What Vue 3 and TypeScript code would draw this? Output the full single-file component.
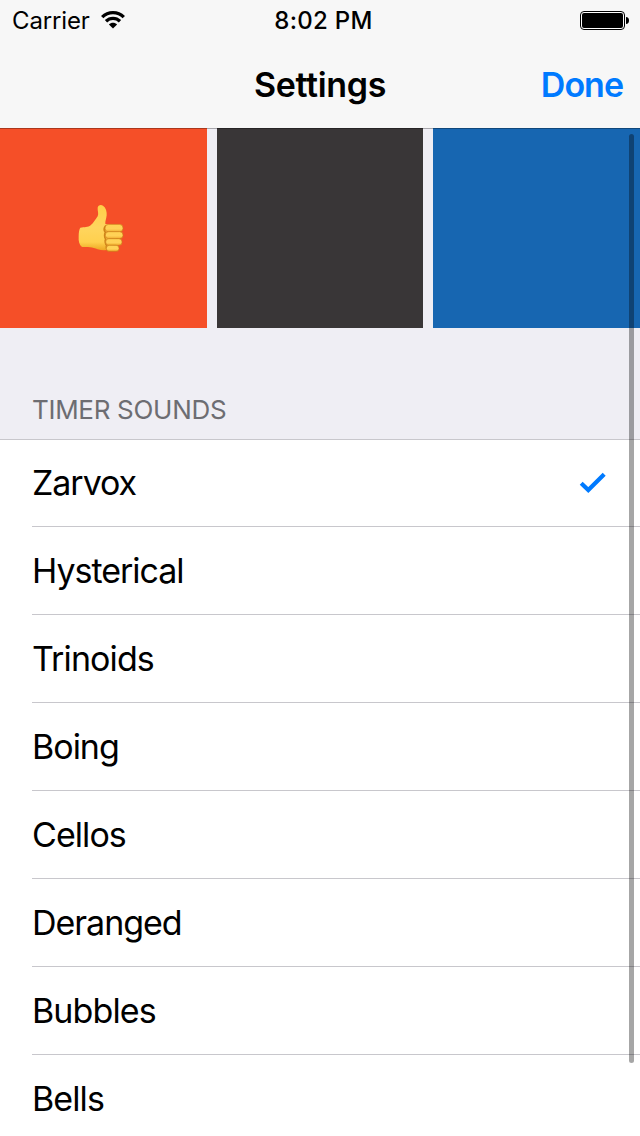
<script setup lang="ts">
interface Sound {
  name: string
  spacing: number
}

const sounds: Sound[] = [
  { name: 'Zarvox', spacing: -1.05 },
  { name: 'Hysterical', spacing: -1.03 },
  { name: 'Trinoids', spacing: -0.9 },
  { name: 'Boing', spacing: -1 },
  { name: 'Cellos', spacing: -0.93 },
  { name: 'Deranged', spacing: -1.03 },
  { name: 'Bubbles', spacing: -0.88 },
  { name: 'Bells', spacing: -0.9 },
]
const selected = 'Zarvox'
</script>

<template>
  <main class="screen">
    <header class="top">
      <div class="status">
        <div class="carrier">
          <span class="carrier-name">Carrier</span>
          <svg class="wifi" width="24" height="20" viewBox="0 0 24 20">
            <g fill="none" stroke="#000" stroke-width="3.3">
              <path d="M1.2 7.2C7.2 1.1 16.8 1.1 22.8 7.2" />
              <path d="M5 11.2C9 7.3 15 7.3 19 11.2" />
            </g>
            <path d="M7.9 14.4C10.2 12.3 13.8 12.3 16.1 14.4L12 18.6Z" />
          </svg>
        </div>
        <time class="clock">8:02 PM</time>
        <svg class="battery" width="49" height="20" viewBox="0 0 49 20">
          <rect x=".5" y=".5" width="44" height="18" rx="3.5" fill="#fff" stroke="#000" />
          <rect x="2" y="2" width="41" height="15" rx="2" />
          <path d="M46 6C48 6 49 7.2 49 9.5S48 13 46 13Z" />
        </svg>
      </div>
      <nav class="nav">
        <h1 class="title">Settings</h1>
        <button class="done" type="button">Done</button>
      </nav>
    </header>

    <section class="swatches">
      <div class="swatch orange">
        <svg class="thumb" width="64" height="64" viewBox="0 0 192 192">
          <defs>
            <linearGradient id="skin" x1="0" y1="0" x2="0" y2="1">
              <stop offset="0" stop-color="#ffcf48" />
              <stop offset=".5" stop-color="#ffd55e" />
              <stop offset=".82" stop-color="#ffd04e" />
              <stop offset="1" stop-color="#eda622" />
            </linearGradient>
            <linearGradient id="finger" x1="0" y1="0" x2="0" y2="1">
              <stop offset="0" stop-color="#ffd253" />
              <stop offset=".6" stop-color="#ffd158" />
              <stop offset="1" stop-color="#efaa2c" />
            </linearGradient>
          </defs>
          <path fill="url(#skin)" d="M31 98C43 96 54 98 62 91C71 83 77 73 83 64C87 56 82 47 83 38C84 30 93 28 99 32C108 38 111 50 110 61C109 72 105 79 106 87L131 91C142 98 141 143 128 155C120 168 98 167 83 163C67 155 54 157 36 156C28 150 25 140 26 124C26 112 28 101 31 98Z" />
          <path d="M108 91C102 98 102 107 106 112C103 117 103 127 107 132C104 138 106 147 110 151C107 157 110 164 116 167" fill="none" stroke="#d08418" stroke-width="5" />
          <g fill="url(#finger)" stroke="#cc7c18" stroke-width="2">
            <rect x="105" y="88" width="54" height="23" rx="11" />
            <rect x="106" y="110" width="53" height="21" rx="10" />
            <rect x="107" y="131" width="49" height="20" rx="9.5" />
            <rect x="109" y="151" width="38" height="18" rx="8.5" />
          </g>
        </svg>
      </div>
      <div class="swatch dark"></div>
      <div class="swatch blue"></div>
    </section>

    <h2 class="heading">TIMER SOUNDS</h2>
    <ul class="list">
      <li v-for="s in sounds" :key="s.name" class="row">
        <span class="name" :style="{ letterSpacing: s.spacing + 'px' }">{{ s.name }}</span>
        <svg v-if="s.name === selected" class="check" width="28" height="22" viewBox="0 0 28 22">
          <path d="M2.2 11.2L9.3 18L25.2 2.2" fill="none" stroke="#007aff" stroke-width="4.2" />
        </svg>
      </li>
    </ul>
    <div class="scrollbar"></div>
  </main>
</template>

<style>
body { margin: 0; overflow: hidden; }
</style>

<style scoped>
.screen {
  position: relative;
  width: 640px;
  height: 1136px;
  overflow: hidden;
  background: #efeef4;
  color: #000;
  font-family: Inter, "Liberation Sans", sans-serif;
}
.top { height: 128px; background: #f7f7f7; }
.status {
  display: grid;
  grid-template-columns: 1fr auto 1fr;
  height: 42px;
  align-items: center;
  padding: 0 11px 0 12px;
}
.carrier { display: flex; align-items: center; gap: 11px; }
.carrier-name { font-size: 24px; line-height: 42px; letter-spacing: -0.15px; }
.wifi { margin-top: -2px; }
.clock { padding-left: 6px; font-size: 24px; line-height: 42px; font-weight: 500; letter-spacing: 0.3px; }
.battery { justify-self: end; }
.nav {
  display: grid;
  grid-template-columns: 1fr auto 1fr;
  height: 86px;
  align-items: center;
}
.title { grid-column: 2; margin: 0; font-size: 34px; line-height: 86px; font-weight: 600; letter-spacing: -0.35px; }
.done {
  justify-self: end;
  margin: 0;
  padding: 0 17px 0 0;
  border: 0;
  background: none;
  color: #007aff;
  font: 600 34px/86px Inter, "Liberation Sans", sans-serif;
  letter-spacing: -1px;
}
.swatches {
  display: grid;
  grid-template-columns: 207px 206px 207px;
  gap: 10px;
  height: 200px;
  background: linear-gradient(#a7a6ab 1px, transparent 1px);
}
.swatch { box-shadow: inset 0 1px rgba(0, 0, 0, 0.3); }
.orange { display: flex; align-items: center; justify-content: center; background: #f54f28; }
.thumb { margin: -2px 3px 0 0; }
.dark { background: #393637; }
.blue { background: #1766b1; }
.heading {
  height: 111px;
  box-sizing: border-box;
  margin: 0;
  padding: 67px 0 0 32px;
  color: #6d6d72;
  font-size: 26px;
  line-height: 30px;
  font-weight: 400;
  letter-spacing: -0.3px;
}
.list { margin: 0; padding: 0; list-style: none; background: #fff; }
.row {
  box-sizing: border-box;
  display: flex;
  align-items: flex-start;
  justify-content: space-between;
  height: 88px;
  margin-left: 32px;
  padding-right: 33px;
  border-top: 1px solid #c8c7cc;
}
.row:first-child { height: 87px; margin-left: 0; padding-left: 32px; }
.name { font-size: 34px; line-height: 87px; }
.row:first-child .name { line-height: 86px; }
.check { align-self: center; }
.scrollbar {
  position: absolute;
  left: 629px;
  top: 134px;
  width: 5px;
  height: 929px;
  border-radius: 2.5px;
  background: rgba(0, 0, 0, 0.35);
}
</style>
